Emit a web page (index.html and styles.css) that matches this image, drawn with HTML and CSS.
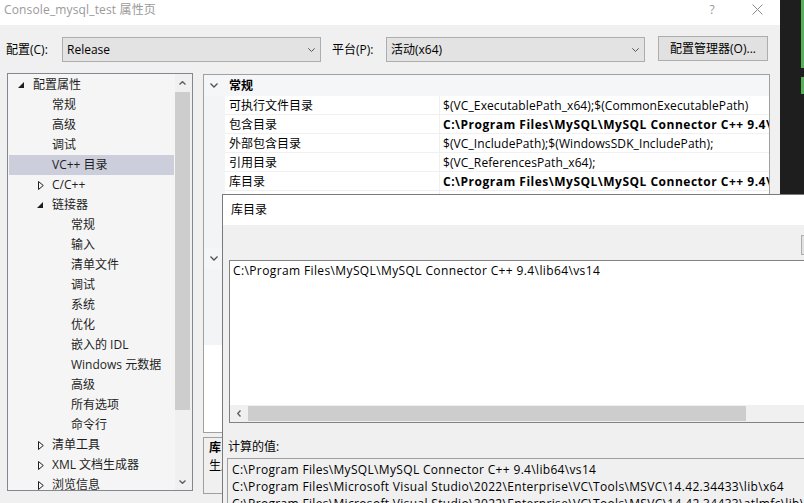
FILE: index.html
```html
<!DOCTYPE html>
<html lang="zh-CN">
<head>
<meta charset="utf-8">
<title>Console_mysql_test 属性页</title>
<link rel="stylesheet" href="styles.css">
</head>
<body>
<div class="screen">
  <div class="window">
    <div class="titlebar">
      <span class="title">Console_mysql_test 属性页</span>
      <span class="help">?</span>
      <svg class="close" width="11" height="11" viewBox="0 0 11 11"><path d="M0.5 0.5 L10.5 10.5 M10.5 0.5 L0.5 10.5" stroke="#8a8a8a" stroke-width="1" fill="none"/></svg>
    </div>
    <div class="toolbar">
      <span class="lbl lbl1">配置(C):</span>
      <div class="combo"><span>Release</span><svg width="7" height="4" viewBox="0 0 7 4"><path d="M0.3 0.3 L3.5 3.5 L6.7 0.3" stroke="#555" stroke-width="1" fill="none"/></svg></div>
      <span class="lbl lbl2">平台(P):</span>
      <div class="combo"><span>活动(x64)</span><svg width="7" height="4" viewBox="0 0 7 4"><path d="M0.3 0.3 L3.5 3.5 L6.7 0.3" stroke="#555" stroke-width="1" fill="none"/></svg></div>
      <div class="cfgbtn">配置管理器(O)...</div>
    </div>
    <div class="content">
      <div class="tree">
        <div class="tree-list">
          <div class="row l0"><span class="twisty"><svg class="tri-f" width="6" height="6" viewBox="0 0 6 6"><path d="M6 0 L6 6 L0 6 Z" fill="#1e1e1e"/></svg></span>配置属性</div>
          <div class="row l1"><span class="twisty"></span>常规</div>
          <div class="row l1"><span class="twisty"></span>高级</div>
          <div class="row l1"><span class="twisty"></span>调试</div>
          <div class="row l1 sel"><span class="twisty"></span>VC++ 目录</div>
          <div class="row l1"><span class="twisty"><svg class="tri-h" width="6" height="9" viewBox="0 0 6 9"><path d="M0.5 0.5 L5.3 4.5 L0.5 8.5 Z" fill="none" stroke="#1e1e1e" stroke-width="1"/></svg></span>C/C++</div>
          <div class="row l1"><span class="twisty"><svg class="tri-f" width="6" height="6" viewBox="0 0 6 6"><path d="M6 0 L6 6 L0 6 Z" fill="#1e1e1e"/></svg></span>链接器</div>
          <div class="row l2"><span class="twisty"></span>常规</div>
          <div class="row l2"><span class="twisty"></span>输入</div>
          <div class="row l2"><span class="twisty"></span>清单文件</div>
          <div class="row l2"><span class="twisty"></span>调试</div>
          <div class="row l2"><span class="twisty"></span>系统</div>
          <div class="row l2"><span class="twisty"></span>优化</div>
          <div class="row l2"><span class="twisty"></span>嵌入的 IDL</div>
          <div class="row l2"><span class="twisty"></span>Windows 元数据</div>
          <div class="row l2"><span class="twisty"></span>高级</div>
          <div class="row l2"><span class="twisty"></span>所有选项</div>
          <div class="row l2"><span class="twisty"></span>命令行</div>
          <div class="row l1"><span class="twisty"><svg class="tri-h" width="6" height="9" viewBox="0 0 6 9"><path d="M0.5 0.5 L5.3 4.5 L0.5 8.5 Z" fill="none" stroke="#1e1e1e" stroke-width="1"/></svg></span>清单工具</div>
          <div class="row l1"><span class="twisty"><svg class="tri-h" width="6" height="9" viewBox="0 0 6 9"><path d="M0.5 0.5 L5.3 4.5 L0.5 8.5 Z" fill="none" stroke="#1e1e1e" stroke-width="1"/></svg></span>XML 文档生成器</div>
          <div class="row l1"><span class="twisty"><svg class="tri-h" width="6" height="9" viewBox="0 0 6 9"><path d="M0.5 0.5 L5.3 4.5 L0.5 8.5 Z" fill="none" stroke="#1e1e1e" stroke-width="1"/></svg></span>浏览信息</div>
        </div>
        <div class="vscroll">
          <div class="sbtn"><svg width="7" height="4" viewBox="0 0 7 4"><path d="M0.5 3.5 L3.5 0.7 L6.5 3.5" stroke="#606060" stroke-width="1.4" fill="none"/></svg></div>
          <div class="vthumb"></div>
          <div class="vspace"></div>
          <div class="sbtn"><svg width="7" height="4" viewBox="0 0 7 4"><path d="M0.5 0.5 L3.5 3.3 L6.5 0.5" stroke="#606060" stroke-width="1.4" fill="none"/></svg></div>
        </div>
      </div>
      <div class="rightcol">
        <div class="grid">
          <div class="cat"><span class="gut"><svg width="8" height="5" viewBox="0 0 8 5"><path d="M0.5 0.5 L4 4 L7.5 0.5" stroke="#505050" stroke-width="1.3" fill="none"/></svg></span><span class="cname">常规</span></div>
          <div class="prow"><span class="gut"></span><span class="name">可执行文件目录</span><span class="val">$(VC_ExecutablePath_x64);$(CommonExecutablePath)</span></div>
          <div class="prow"><span class="gut"></span><span class="name">包含目录</span><span class="val b">C:\Program Files\MySQL\MySQL Connector C++ 9.4\include;$(IncludePath)</span></div>
          <div class="prow"><span class="gut"></span><span class="name">外部包含目录</span><span class="val">$(VC_IncludePath);$(WindowsSDK_IncludePath);</span></div>
          <div class="prow"><span class="gut"></span><span class="name">引用目录</span><span class="val">$(VC_ReferencesPath_x64);</span></div>
          <div class="prow"><span class="gut"></span><span class="name">库目录</span><span class="val b">C:\Program Files\MySQL\MySQL Connector C++ 9.4\lib64\vs14;$(LibraryPath)</span></div>
          <div class="prow"><span class="gut"></span><span class="name">库 WinRT 目录</span><span class="val">$(WindowsSDK_MetadataPath);</span></div>
          <div class="prow"><span class="gut"></span><span class="name">源目录</span><span class="val">$(VC_SourcePath);</span></div>
          <div class="prow"><span class="gut"></span><span class="name">排除目录</span><span class="val">$(CommonExcludePath);$(VC_ExecutablePath_x64);$(VC_LibraryPath_x64)</span></div>
          <div class="cat"><span class="gut"><svg width="8" height="5" viewBox="0 0 8 5"><path d="M0.5 0.5 L4 4 L7.5 0.5" stroke="#505050" stroke-width="1.3" fill="none"/></svg></span><span class="cname">公共项目内容</span></div>
          <div class="prow"><span class="gut"></span><span class="name">公共包含目录</span><span class="val"></span></div>
          <div class="prow"><span class="gut"></span><span class="name">所有头文件都是公共的</span><span class="val">否</span></div>
          <div class="prow"><span class="gut"></span><span class="name">公共 C++ 模块目录</span><span class="val"></span></div>
          <div class="prow"><span class="gut"></span><span class="name">所有模块都是公共的</span><span class="val">否</span></div>
        </div>
        <div class="desc">
          <div class="dtitle-b">库目录</div>
          <div>生成 VC++ 项目期间，要使用的库文件的路径。与环境变量 LIB 相对应。</div>
        </div>
      </div>
    </div>
  </div>
  <div class="strip">
    <div class="gbar g1"></div>
    <div class="gbar g2"></div>
  </div>

  <div class="dialog">
    <div class="dlg-title">库目录</div>
    <div class="dlg-tools"><div class="tbtn"></div></div>
    <div class="edit">
      <div class="lines">C:\Program Files\MySQL\MySQL Connector C++ 9.4\lib64\vs14</div>
      <div class="hscroll">
        <div class="hbtn"><svg width="4" height="7" viewBox="0 0 4 7"><path d="M3.5 0.5 L0.7 3.5 L3.5 6.5" stroke="#606060" stroke-width="1.4" fill="none"/></svg></div>
        <div class="hthumb"></div>
      </div>
    </div>
    <div class="clabel">计算的值:</div>
    <div class="cbox">
      <div>C:\Program Files\MySQL\MySQL Connector C++ 9.4\lib64\vs14</div>
      <div>C:\Program Files\Microsoft Visual Studio\2022\Enterprise\VC\Tools\MSVC\14.42.34433\lib\x64</div>
      <div>C:\Program Files\Microsoft Visual Studio\2022\Enterprise\VC\Tools\MSVC\14.42.34433\atlmfc\lib\x64</div>
    </div>
  </div>
</div>
</body>
</html>
```

FILE: styles.css
```css
* { box-sizing: border-box; margin: 0; padding: 0; }
html, body { width: 804px; height: 503px; overflow: hidden; }
body {
  font-family: "Open Sans", "Noto Sans CJK SC", sans-serif;
  font-size: 12px;
  color: #000;
  background: #1e1e1e;
}
.screen { position: relative; display: flex; width: 804px; height: 503px; overflow: hidden; }

.window { width: 780px; height: 503px; background: #f0f0f0; display: flex; flex-direction: column; flex: none; }

.titlebar { height: 25px; background: #fff; display: flex; align-items: flex-start; padding-top: 1px; flex: none; }
.title { flex: 1; padding-left: 4px; line-height: 17px; color: #9a9a9a; letter-spacing: 0.15px; }
.help { width: 12px; text-align: center; line-height: 17px; color: #9a9a9a; margin-right: 34px; }
.close { margin-top: 3px; margin-right: 17px; }

.toolbar { height: 48px; display: flex; align-items: flex-start; padding: 12px 0 0 6px; flex: none; }
.lbl { line-height: 25px; flex: none; }
.lbl1 { width: 56px; }
.lbl2 { width: 54px; margin-left: 11px; }
.combo {
  width: 259px; height: 25px; flex: none;
  border: 1px solid #adadad; background: #e3e3e3;
  display: flex; align-items: center; justify-content: space-between;
  padding: 0 5px 0 4px; line-height: 23px;
}
.cfgbtn {
  margin-left: 13px; margin-top: -1px; width: 110px; height: 25px; flex: none;
  border: 1px solid #adadad; background: #e1e1e1;
  line-height: 23px; text-align: center;
}

.content { flex: 1; display: flex; align-items: flex-start; padding-left: 7px; gap: 10px; }

.tree { width: 186px; height: 418px; border: 1px solid #828790; background: #f5f5f5; display: flex; flex: none; }
.tree-list { width: 167px; padding-top: 1px; overflow: hidden; }
.row { height: 20px; line-height: 20px; margin-left: 1px; display: flex; align-items: center; white-space: nowrap; color: #1e1e1e; }
.row.l0 { padding-left: 7px; }
.row.l1 { padding-left: 26px; }
.row.l2 { padding-left: 45px; }
.row.sel { background: #cccedb; margin-right: 1px; }
.twisty { width: 17px; height: 20px; flex: none; display: flex; align-items: center; }
.tri-f { margin-left: 2px; }
.tri-h { margin-left: 3px; }

.vscroll { width: 17px; background: #f0f0f0; display: flex; flex-direction: column; flex: none; }
.sbtn { height: 17px; display: flex; align-items: center; justify-content: center; padding-right: 2px; flex: none; }
.vthumb { height: 318px; margin: 1px 2px 0 0; background: #cdcdcd; flex: none; }
.vspace { flex: 1; }

.rightcol { width: 567px; display: flex; flex-direction: column; flex: none; }
.grid { margin-top: 1px; height: 359px; border: 1px solid #a0a0a0; background: #fff; overflow: hidden; flex: none; }
.cat { height: 21px; display: flex; align-items: center; background: #f5f6f8; }
.gut { width: 21px; height: 100%; flex: none; display: flex; align-items: center; justify-content: center; padding-right: 1px; }
.cname { font-weight: bold; padding-left: 4px; line-height: 22px; }
.prow { height: 19px; display: flex; }
.prow .gut { background: #f3f4f6; }
.name {
  width: 215px; flex: none; padding-left: 4px; line-height: 19px;
  border-bottom: 1px solid #f0f0f0; border-right: 1px solid #f0f0f0;
  white-space: nowrap; overflow: hidden;
}
.val {
  flex: 1; padding-left: 3px; line-height: 19px; border-bottom: 1px solid #f0f0f0;
  white-space: nowrap; overflow: hidden; letter-spacing: 0.1px;
}
.val.b { font-weight: bold; letter-spacing: 0.5px; }

.desc { margin-top: 4px; height: 57px; border: 1px solid #a0a0a0; padding: 1px 0 0 5px; line-height: 18px; white-space: nowrap; overflow: hidden; flex: none; }
.dtitle-b { font-weight: bold; }

.strip { width: 24px; height: 503px; background: #1e1e1e; display: flex; flex-direction: column; padding-left: 21px; gap: 9px; flex: none; }
.gbar { width: 3px; background: #58b158; }
.g1 { height: 68px; }
.g2 { height: 17px; }

.dialog {
  position: absolute; left: 222px; top: 194px; width: 600px; height: 330px;
  border: 1px solid #7a7a7a; background: #f0f0f0;
  display: flex; flex-direction: column;
}
.dlg-title { height: 30px; background: #fff; padding-left: 8px; line-height: 30px; flex: none; }
.dlg-tools { height: 35px; padding: 10px 0 0 578px; flex: none; }
.tbtn { width: 24px; height: 20px; border: 1px solid #adadad; background: #e1e1e1; }
.edit {
  margin-left: 6px; width: 580px; height: 163px; flex: none;
  border: 1px solid #828282; background: #fff;
  display: flex; flex-direction: column;
}
.lines { flex: 1; padding: 1px 0 0 3px; line-height: 17px; white-space: nowrap; letter-spacing: 0.38px; }
.hscroll { height: 17px; background: #f0f0f0; display: flex; align-items: center; flex: none; }
.hbtn { width: 17px; height: 17px; display: flex; align-items: center; justify-content: center; flex: none; }
.hthumb { width: 498px; height: 15px; margin-left: 1px; background: #cdcdcd; flex: none; }
.clabel { margin: 15px 0 0 5px; line-height: 17px; flex: none; }
.cbox { margin: 3px 0 0 4px; width: 600px; height: 80px; border: 1px solid #a0a0a0; padding: 2px 0 0 4px; line-height: 17px; white-space: nowrap; flex: none; letter-spacing: 0.33px; }
```
